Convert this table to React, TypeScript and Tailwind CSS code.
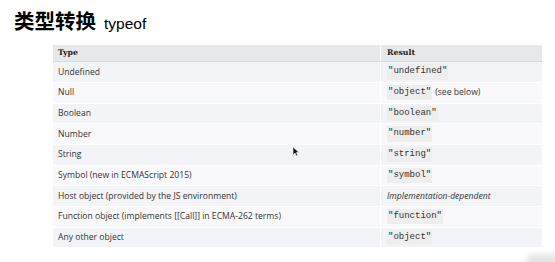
import React from "react";

const rows: { t: string; r: React.ReactNode }[] = [
  { t: "Undefined", r: <Code>"undefined"</Code> },
  { t: "Null", r: <><Code>"object"</Code> <span className="ml-[3px]">(see below)</span></> },
  { t: "Boolean", r: <Code>"boolean"</Code> },
  { t: "Number", r: <Code>"number"</Code> },
  { t: "String", r: <Code>"string"</Code> },
  { t: "Symbol (new in ECMAScript 2015)", r: <Code>"symbol"</Code> },
  { t: "Host object (provided by the JS environment)", r: <em>Implementation-dependent</em> },
  { t: "Function object (implements [[Call]] in ECMA-262 terms)", r: <Code>"function"</Code> },
  { t: "Any other object", r: <Code>"object"</Code> },
];

function Code({ children }: { children: React.ReactNode }) {
  return (
    <span className="bg-[#eeeeee] px-[1px] py-[1px] font-['Liberation_Mono',monospace] text-[9px] text-[#333]">
      {children}
    </span>
  );
}

export default function App() {
  return (
    <div className="relative w-[555px] h-[262px] bg-white overflow-hidden">
      <div className="flex items-baseline pl-[14px] pt-[7px]">
        <span className="font-['Noto_Sans_CJK_SC',sans-serif] font-bold text-[20.5px] leading-[27px] text-black">类型转换</span>
        <span className="ml-[8px] font-['Liberation_Sans',sans-serif] text-[15.5px] text-black">typeof</span>
      </div>
      <div className="ml-[53px] mt-[10px] w-[489px] font-['Open_Sans',sans-serif] text-[8.6px] text-[#333]">
        <div className="flex h-[17px] bg-[#e7e8ec] border-b border-[#d9dadf] font-['DejaVu_Serif',serif] font-bold text-[7.8px] text-[#222]">
          <div className="w-[328px] flex items-center pl-[5px] border-r border-white">Type</div>
          <div className="flex-1 flex items-center pl-[6px]">Result</div>
        </div>
        {rows.map((row, i) => (
          <div
            key={i}
            className={`flex h-[20.67px] border-b border-white ${i % 2 === 0 ? "bg-[#f3f4f8]" : "bg-[#f9f9fb]"}`}
          >
            <div className="w-[328px] flex items-center pl-[5px] border-r border-white whitespace-nowrap">{row.t}</div>
            <div className="flex-1 flex items-center pl-[6px] whitespace-nowrap">{row.r}</div>
          </div>
        ))}
      </div>
      <svg className="absolute left-[292px] top-[146px]" width="8" height="11" viewBox="0 0 8 11">
        <path d="M1 1 L1 9 L3 7 L4.5 10 L5.8 9.4 L4.4 6.6 L7 6.5 Z" fill="#111" stroke="#fff" strokeWidth="0.6" />
      </svg>
      <div className="absolute left-[525px] top-[254px] w-[40px] h-[20px] rounded-full bg-[#e4e4e4] blur-[3px]" />
    </div>
  );
}
